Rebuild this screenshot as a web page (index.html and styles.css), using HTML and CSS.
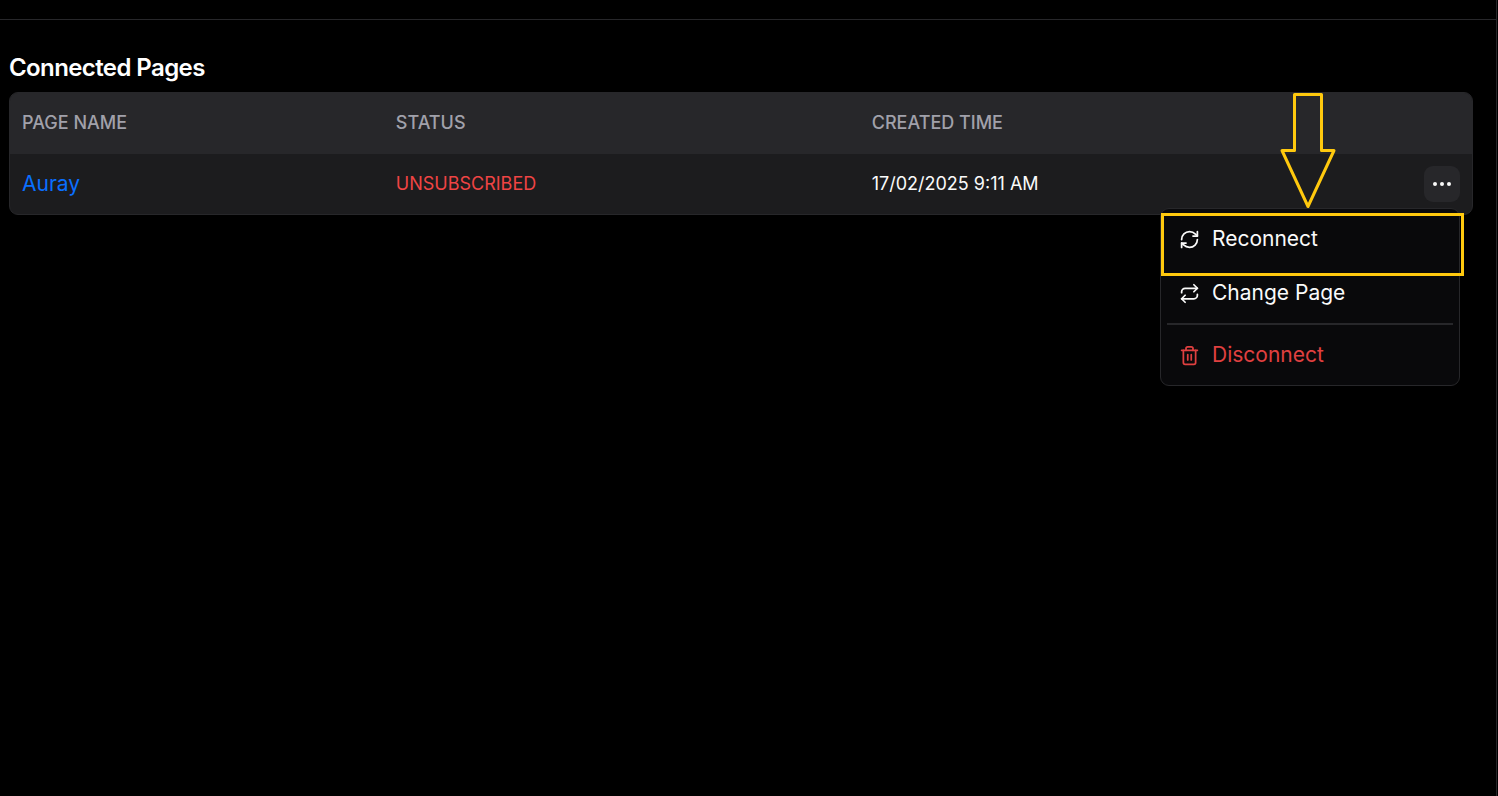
FILE: index.html
```html
<!DOCTYPE html>
<html lang="en">
<head>
<meta charset="utf-8">
<title>Connected Pages</title>
<link rel="stylesheet" href="styles.css">
</head>
<body>
<div class="app">
  <div class="topbar"></div>
  <main class="content">
    <h1 class="title">Connected Pages</h1>
    <table class="pages">
      <thead>
        <tr>
          <th class="col-name">Page Name</th>
          <th class="col-status">Status</th>
          <th class="col-time">Created Time</th>
          <th class="col-actions" aria-label="Actions"></th>
        </tr>
      </thead>
      <tbody>
        <tr>
          <td><a class="page-link" href="#">Auray</a></td>
          <td class="status">Unsubscribed</td>
          <td>17/02/2025 9:11 AM</td>
          <td class="actions-cell">
            <div class="actions">
              <button class="more" type="button" aria-label="More actions" aria-expanded="true">
                <svg class="dots" viewBox="0 0 24 24"><circle cx="5" cy="12" r="2"/><circle cx="12" cy="12" r="2"/><circle cx="19" cy="12" r="2"/></svg>
              </button>
              <div class="menu" role="menu">
                <button class="item" type="button" role="menuitem">
                  <svg class="icon" viewBox="0 0 24 24"><path d="M3 12a9 9 0 0 1 9-9 9.75 9.75 0 0 1 6.74 2.74L21 8"/><path d="M21 3v5h-5"/><path d="M21 12a9 9 0 0 1-9 9 9.75 9.75 0 0 1-6.74-2.74L3 16"/><path d="M8 16H3v5"/></svg>
                  <span class="label">Reconnect</span>
                </button>
                <button class="item" type="button" role="menuitem">
                  <svg class="icon" viewBox="0 0 24 24"><path d="m17 2 4 4-4 4"/><path d="M3 11v-1a4 4 0 0 1 4-4h14"/><path d="m7 22-4-4 4-4"/><path d="M21 13v1a4 4 0 0 1-4 4H3"/></svg>
                  <span class="label">Change Page</span>
                </button>
                <div class="separator" role="separator"></div>
                <button class="item danger" type="button" role="menuitem">
                  <svg class="icon" viewBox="0 0 24 24"><path d="M3 6h18"/><path d="M19 6v14c0 1-1 2-2 2H7c-1 0-2-1-2-2V6"/><path d="M8 6V4c0-1 1-2 2-2h4c1 0 2 1 2 2v2"/><path d="M10 11v6"/><path d="M14 11v6"/></svg>
                  <span class="label">Disconnect</span>
                </button>
                <div class="highlight"></div>
                <svg class="arrow" viewBox="0 0 56 118"><path d="M14.500 2.500H41.500V58.500H54L28 114.500L2 58.500H14.500Z"/></svg>
              </div>
            </div>
          </td>
        </tr>
      </tbody>
    </table>
  </main>
</div>
</body>
</html>
```
FILE: styles.css
```css
* {
  box-sizing: border-box;
}

body {
  margin: 0;
  background: #000;
  color: #fafafa;
  font-family: Inter, "Liberation Sans", sans-serif;
  font-size: 18px;
}

.app {
  min-height: 100vh;
  margin-right: 1px;
  border-right: 1px solid #27272a;
}

.topbar {
  height: 20px;
  border-bottom: 1px solid #27272a;
}

.content {
  padding: 30px 23px 0 9px;
}

.title {
  margin: 0 0 6px;
  font-size: 24px;
  line-height: 36px;
  font-weight: 600;
  letter-spacing: -0.025em;
  color: #fff;
}

.pages {
  width: 100%;
  table-layout: fixed;
  border-collapse: separate;
  border-spacing: 0;
  border: 1px solid #27272a;
  border-radius: 9px;
  background: #1c1c1e;
}

.pages th,
.pages td {
  padding: 0 12px 2px;
  text-align: left;
}

.pages th {
  height: 61px;
  background: #27272a;
  color: #a1a1aa;
  font-weight: 500;
  text-transform: uppercase;
}

.pages th:first-child {
  border-top-left-radius: 8px;
}

.pages th:last-child {
  border-top-right-radius: 8px;
}

.pages td {
  height: 60px;
}

.pages .actions-cell {
  padding: 0 12px;
}

.col-name {
  width: 25.57%;
}

.col-status {
  width: 32.55%;
}

.col-time {
  width: 24%;
}

.page-link {
  color: #0a6fff;
  font-size: 21px;
  text-decoration: none;
}

.pages .status {
  color: #ef4444;
  text-transform: uppercase;
}

.actions {
  position: relative;
  display: flex;
  justify-content: flex-end;
}

.more {
  display: flex;
  align-items: center;
  justify-content: center;
  width: 36px;
  height: 36px;
  padding: 0;
  border: 0;
  border-radius: 9px;
  background: #27272a;
}

.dots {
  width: 24px;
  height: 24px;
  fill: #fafafa;
}

.menu {
  position: absolute;
  top: 42px;
  right: 0;
  display: flex;
  flex-direction: column;
  gap: 6px;
  width: 300px;
  padding: 6px;
  border: 1px solid #27272a;
  border-radius: 9px;
  background: #09090b;
}

.item {
  display: flex;
  align-items: center;
  gap: 12px;
  height: 48px;
  padding: 0 12px;
  border: 0;
  background: none;
  color: #fafafa;
  font-family: inherit;
  font-size: 21px;
  text-align: left;
}

.label {
  padding-bottom: 2px;
}

.danger {
  color: #e04040;
}

.icon {
  width: 21px;
  height: 21px;
  fill: none;
  stroke: currentColor;
  stroke-width: 2;
  stroke-linecap: round;
  stroke-linejoin: round;
}

.separator {
  height: 2px;
  background: #27272a;
}

.highlight {
  position: absolute;
  top: 4px;
  left: 0;
  width: 303px;
  height: 63px;
  border: 3px solid #ffc90e;
  pointer-events: none;
}

.arrow {
  position: absolute;
  top: -117px;
  left: 119px;
  width: 56px;
  height: 118px;
  fill: none;
  stroke: #ffc90e;
  stroke-width: 3;
  stroke-linejoin: round;
  pointer-events: none;
}
```
